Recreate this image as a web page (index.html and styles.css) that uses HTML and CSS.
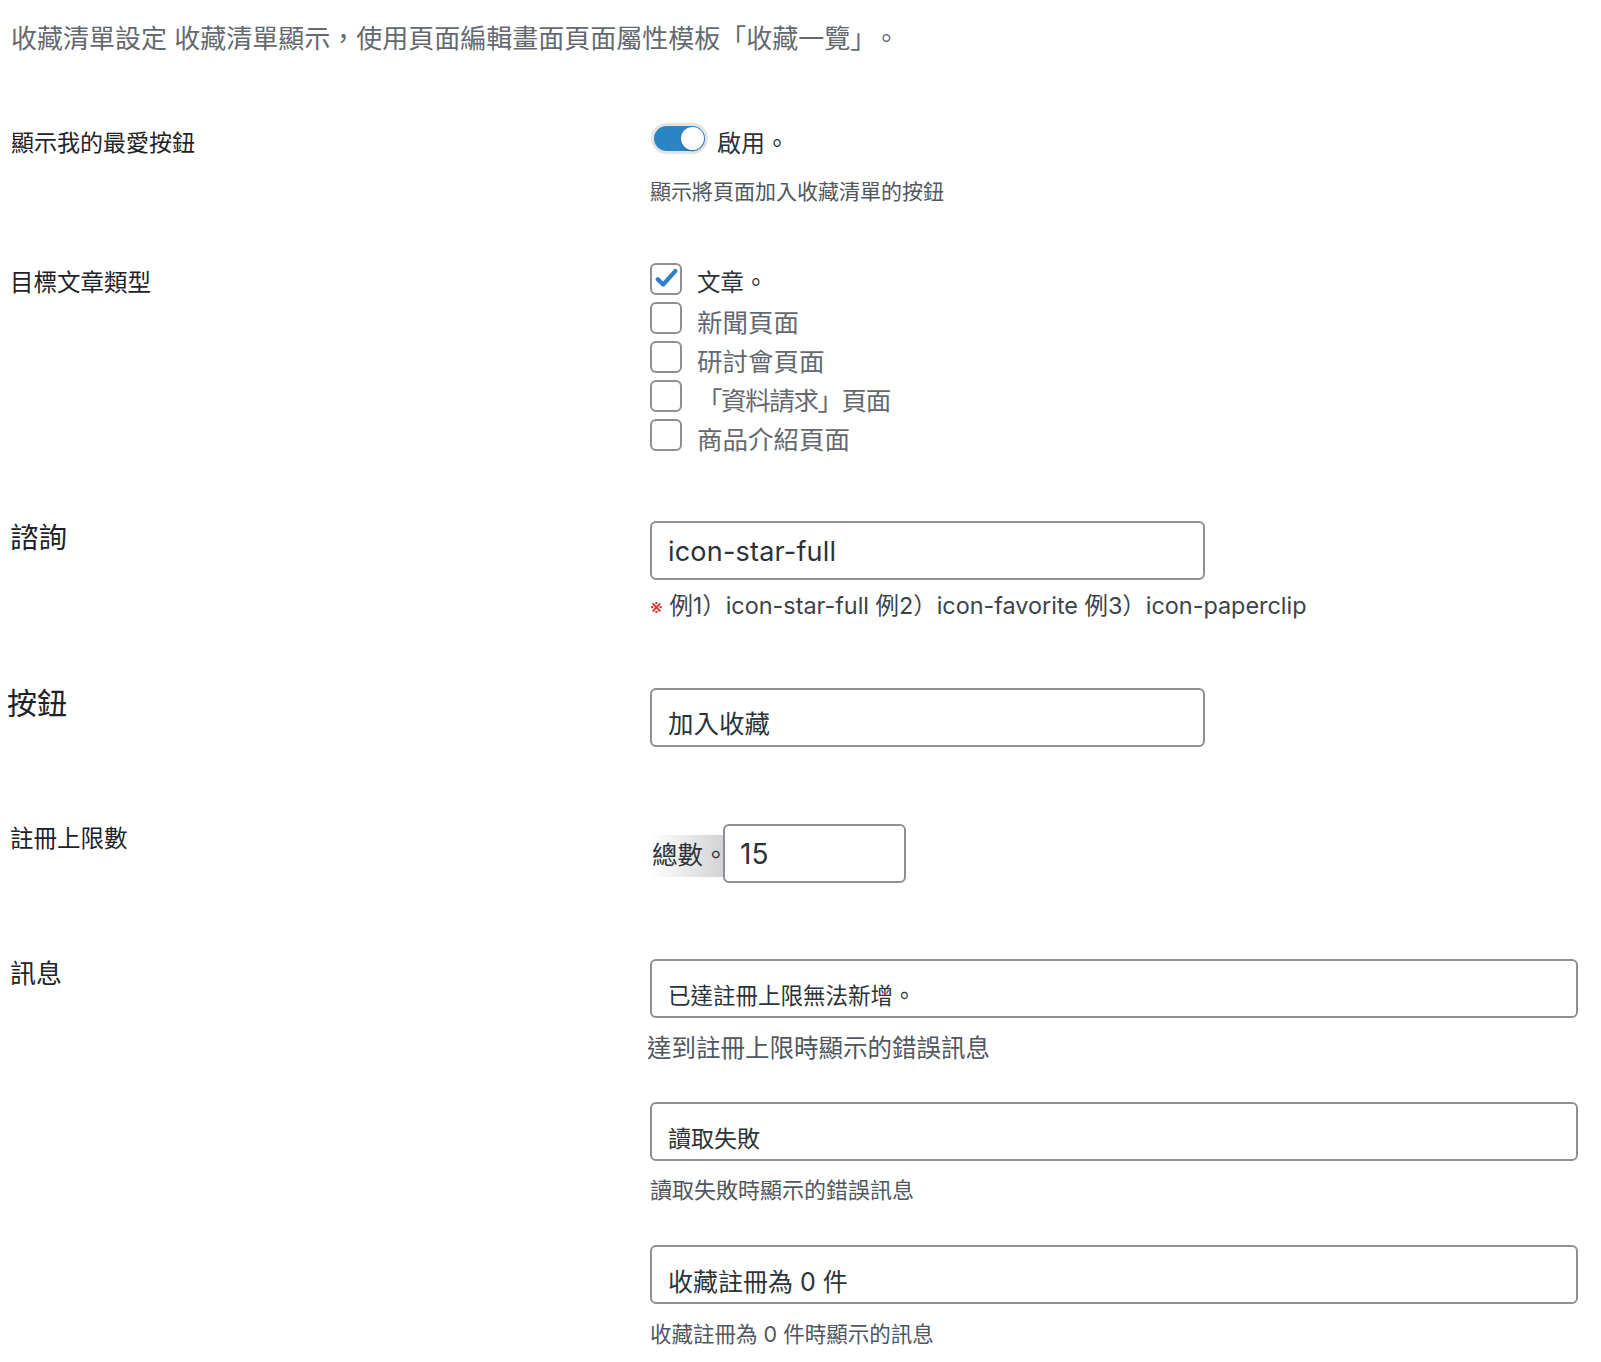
FILE: index.html
```html
<!DOCTYPE html>
<html lang="zh-Hant">
<head>
    <meta charset="UTF-8">
    <meta name="viewport" content="width=device-width, initial-scale=1.0">
    <title>收藏清單設定</title>
    <link rel="stylesheet" href="styles.css">
</head>
<body>
    <div class="settings">
        <p class="page-title">收藏清單設定 收藏清單顯示，使用頁面編輯畫面頁面屬性模板「收藏一覽」<span class="title-stop">。</span></p>

        <!-- 顯示按鈕 -->
        <div class="form-row row-show">
            <div class="row-label label-show">顯示我的最愛按鈕</div>
            <div class="row-field">
                <div class="switch-line">
                    <span class="switch"><span class="switch-knob"></span></span>
                    <span class="switch-text">啟用。</span>
                </div>
                <p class="field-desc desc-show">顯示將頁面加入收藏清單的按鈕</p>
            </div>
        </div>

        <!-- 文章類型 -->
        <div class="form-row row-types">
            <div class="row-label label-types">目標文章類型</div>
            <div class="row-field">
                <ul class="check-list">
                    <li class="check-item is-checked">
                        <span class="checkbox">
                            <svg viewBox="0 0 24 24" width="27" height="27"><path d="M4.2 12.6l4.8 4.8L19.8 5.4" fill="none" stroke="#2f7fc8" stroke-width="3.8" stroke-linecap="round" stroke-linejoin="round"/></svg>
                        </span>
                        <span class="check-text">文章。</span>
                    </li>
                    <li class="check-item"><span class="checkbox"></span><span class="check-text">新聞頁面</span></li>
                    <li class="check-item"><span class="checkbox"></span><span class="check-text">研討會頁面</span></li>
                    <li class="check-item"><span class="checkbox"></span><span class="check-text text-bracket">「資料請求」頁面</span></li>
                    <li class="check-item"><span class="checkbox"></span><span class="check-text">商品介紹頁面</span></li>
                </ul>
            </div>
        </div>

        <!-- 圖示 -->
        <div class="form-row row-icon">
            <div class="row-label label-icon">諮詢</div>
            <div class="row-field">
                <input class="text-input input-mid input-latin" type="text" value="icon-star-full">
                <p class="field-hint"><span class="hint-mark">※</span> 例1）icon-star-full 例2）icon-favorite 例3）icon-paperclip</p>
            </div>
        </div>

        <!-- 按鈕文字 -->
        <div class="form-row row-button">
            <div class="row-label label-button">按鈕</div>
            <div class="row-field">
                <input class="text-input input-mid input-low" type="text" value="加入收藏">
            </div>
        </div>

        <!-- 上限 -->
        <div class="form-row row-limit">
            <div class="row-label label-limit">註冊上限數</div>
            <div class="row-field">
                <div class="input-group">
                    <span class="input-addon">總數。</span>
                    <input class="text-input input-number" type="text" value="15">
                </div>
            </div>
        </div>

        <!-- 訊息 -->
        <div class="form-row row-message">
            <div class="row-label label-message">訊息</div>
            <div class="row-field">
                <input class="text-input input-wide input-low msg-1" type="text" value="已達註冊上限無法新增。">
                <p class="field-desc desc-msg-1">達到註冊上限時顯示的錯誤訊息</p>

                <input class="text-input input-wide input-low msg-2" type="text" value="讀取失敗">
                <p class="field-desc desc-msg-2">讀取失敗時顯示的錯誤訊息</p>

                <input class="text-input input-wide input-low msg-3" type="text" value="收藏註冊為 0 件">
                <p class="field-desc desc-msg-3">收藏註冊為 0 件時顯示的訊息</p>
            </div>
        </div>
    </div>
</body>
</html>
```

FILE: styles.css
```css
/* Base */
* {
    margin: 0;
    padding: 0;
    box-sizing: border-box;
}

body {
    background: #fff;
    color: #1d2327;
    font-family: Inter, "Noto Sans CJK TC", sans-serif;
}

.settings {
    padding-top: 22px;
}

.page-title {
    margin-left: 11px;
    font-size: 26px;
    line-height: 34px;
    color: #646970;
}

.title-stop {
    margin-left: 10px;
}

/* Rows */
.form-row {
    display: grid;
    grid-template-columns: 650px 1fr;
}

.row-label {
    padding-left: 10px;
    line-height: 30px;
    color: #1d2327;
}

.row-field {
    display: flex;
    flex-direction: column;
    align-items: flex-start;
}

.row-show { margin-top: 66px; }
.row-types { margin-top: 53px; }
.row-icon { margin-top: 67px; }
.row-button { margin-top: 67px; }
.row-limit { margin-top: 77px; }
.row-message { margin-top: 76px; }

.label-show { font-size: 23px; padding-top: 6px; padding-left: 11px; }
.label-types { font-size: 23.5px; padding-top: 9px; }
.label-icon { font-size: 28.5px; padding-top: 2px; }
.label-button { font-size: 30px; padding-left: 7px; }
.label-limit { font-size: 23.5px; }
.label-message { font-size: 26px; }

.field-desc {
    color: #50575e;
    line-height: 28px;
}

/* Toggle */
.switch-line {
    display: flex;
    align-items: center;
    height: 32px;
    margin-left: 1px;
}

.switch {
    position: relative;
    width: 57px;
    height: 31px;
    border-radius: 16px;
    background: #2a86c3;
    border: 3px solid #e3e3e5;
}

.switch-knob {
    position: absolute;
    top: 1px;
    right: 1px;
    width: 23px;
    height: 23px;
    border-radius: 50%;
    background: #fff;
    box-shadow: 0 1px 2px rgba(0, 0, 0, 0.25);
}

.switch-text {
    margin-left: 9px;
    font-size: 24px;
    color: #2c3338;
    padding-top: 7px;
}

.desc-show {
    margin-top: 24px;
    font-size: 21px;
}

/* Checkboxes */
.check-list {
    list-style: none;
}

.check-item {
    display: flex;
    align-items: center;
    height: 39px;
}

.checkbox {
    display: flex;
    align-items: center;
    justify-content: center;
    width: 32px;
    height: 32px;
    border: 2px solid #8c8f94;
    border-radius: 6px;
    background: #fff;
}

.check-text {
    margin-left: 15px;
    font-size: 25.5px;
    color: #646970;
    padding-top: 5px;
}

.text-bracket {
    letter-spacing: -1.4px;
}

.is-checked .check-text {
    font-size: 23.5px;
    color: #2c3338;
}

/* Text inputs */
.text-input {
    display: block;
    height: 59px;
    border: 2px solid #8c8f94;
    border-radius: 6px;
    background: #fff;
    color: #2c3338;
    font-family: Inter, "Noto Sans CJK TC", sans-serif;
    padding: 0 16px;
    outline: none;
}

.input-mid { width: 555px; }
.input-wide { width: 928px; }

.input-latin {
    font-size: 27px;
    letter-spacing: 0.2px;
    padding-top: 2px;
}

.input-low {
    padding-top: 10px;
}

.row-button .text-input {
    font-size: 25.5px;
    padding-top: 8px;
}

.field-hint {
    margin-top: 12px;
    font-size: 23.4px;
    line-height: 28px;
    color: #3c434a;
}

.hint-mark {
    color: #d63638;
    font-size: 20px;
}

/* Number with addon */
.input-group {
    display: flex;
    align-items: flex-end;
}

.input-addon {
    width: 73px;
    height: 42px;
    margin-bottom: 6px;
    font-size: 25.5px;
    line-height: 40px;
    padding-left: 2px;
    white-space: nowrap;
    color: #2c3338;
    background: linear-gradient(to right, #fff, #d3d3d5);
}

.input-number {
    position: relative;
    width: 183px;
    font-size: 28px;
    padding-left: 15px;
}

/* Messages */
.msg-1 { font-size: 22.5px; }
.msg-2 { font-size: 23px; margin-top: 39px; }
.msg-3 { font-size: 25px; margin-top: 41px; }

.desc-msg-1 { font-size: 24.5px; margin-top: 15px; margin-left: -3px; line-height: 30px; }
.desc-msg-2 { font-size: 22px; margin-top: 15px; }
.desc-msg-3 { font-size: 21.5px; margin-top: 16px; }
```
